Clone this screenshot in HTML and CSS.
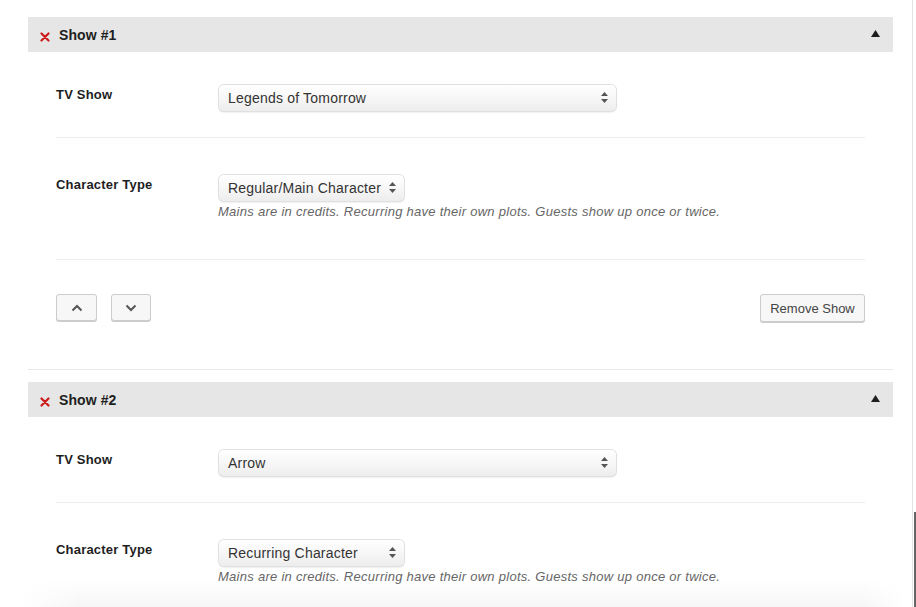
FILE: index.html
```
<!DOCTYPE html>
<html>
<head>
<meta charset="utf-8">
<link rel="stylesheet" href="styles.css">
</head>
<body>
<div class="page">
  <div class="show">
    <div class="show-head">
      <svg class="x-icon" width="10" height="10" viewBox="0 0 10 10"><path d="M1.5 1.5 L8.5 8.5 M8.5 1.5 L1.5 8.5" stroke="#cc1b1b" stroke-width="2.2" stroke-linecap="round"/></svg>
      <span class="show-title">Show #1</span>
      <svg class="toggle" width="9" height="7" viewBox="0 0 9 7"><polygon points="4.5,0 9,7 0,7" fill="#1e1e1e"/></svg>
    </div>
    <div class="show-body">
      <div class="field field-first">
        <div class="label">TV Show</div>
        <div class="control">
          <div class="select wide">Legends of Tomorrow<span class="arrows"><svg width="7" height="11" viewBox="0 0 7 11"><polygon points="3.5,0 7,4 0,4" fill="#555"/><polygon points="0,7 7,7 3.5,11" fill="#555"/></svg></span></div>
        </div>
      </div>
      <div class="field field-second">
        <div class="label">Character Type</div>
        <div class="control">
          <div class="select narrow">Regular/Main Character<span class="arrows"><svg width="7" height="11" viewBox="0 0 7 11"><polygon points="3.5,0 7,4 0,4" fill="#555"/><polygon points="0,7 7,7 3.5,11" fill="#555"/></svg></span></div>
          <p class="hint">Mains are in credits. Recurring have their own plots. Guests show up once or twice.</p>
        </div>
      </div>
      <div class="actions">
        <div class="move">
          <button class="btn icon-btn up"><svg width="12" height="8" viewBox="0 0 12 8"><path d="M1.5 6.5 L6 2 L10.5 6.5" fill="none" stroke="#555" stroke-width="2"/></svg></button>
          <button class="btn icon-btn down"><svg width="12" height="8" viewBox="0 0 12 8"><path d="M1.5 1.5 L6 6 L10.5 1.5" fill="none" stroke="#555" stroke-width="2"/></svg></button>
        </div>
        <button class="btn remove">Remove Show</button>
      </div>
    </div>
  </div>

  <div class="show">
    <div class="show-head">
      <svg class="x-icon" width="10" height="10" viewBox="0 0 10 10"><path d="M1.5 1.5 L8.5 8.5 M8.5 1.5 L1.5 8.5" stroke="#cc1b1b" stroke-width="2.2" stroke-linecap="round"/></svg>
      <span class="show-title">Show #2</span>
      <svg class="toggle" width="9" height="7" viewBox="0 0 9 7"><polygon points="4.5,0 9,7 0,7" fill="#1e1e1e"/></svg>
    </div>
    <div class="show-body">
      <div class="field field-first">
        <div class="label">TV Show</div>
        <div class="control">
          <div class="select wide">Arrow<span class="arrows"><svg width="7" height="11" viewBox="0 0 7 11"><polygon points="3.5,0 7,4 0,4" fill="#555"/><polygon points="0,7 7,7 3.5,11" fill="#555"/></svg></span></div>
        </div>
      </div>
      <div class="field field-second">
        <div class="label">Character Type</div>
        <div class="control">
          <div class="select narrow">Recurring Character<span class="arrows"><svg width="7" height="11" viewBox="0 0 7 11"><polygon points="3.5,0 7,4 0,4" fill="#555"/><polygon points="0,7 7,7 3.5,11" fill="#555"/></svg></span></div>
          <p class="hint">Mains are in credits. Recurring have their own plots. Guests show up once or twice.</p>
        </div>
      </div>
    </div>
  </div>
</div>
<div class="edge"></div>
<div class="edge-dark"></div>
<div class="bottom-shade"></div>
</body>
</html>
```
FILE: styles.css
```
html, body {
  margin: 0;
  padding: 0;
  background: #fff;
  height: 100%;
  overflow: hidden;
}
body {
  font-family: "Liberation Sans", Arial, sans-serif;
  color: #23282d;
}
.page {
  padding: 17px 0 0 28px;
  width: 865px;
}
.show {
  margin-bottom: 12px;
}
.show-head {
  height: 35px;
  background: #e6e6e6;
  display: flex;
  align-items: center;
  padding: 0 13px 0 12px;
}
.x-icon {
  margin-top: 4px;
  margin-right: 9px;
}
.show-title {
  font-size: 14px;
  font-weight: bold;
  color: #1e1e1e;
  flex: 1;
  letter-spacing: 0.1px;
}
.toggle {
  margin-top: -2px;
}
.show-body {
  padding: 0 28px;
  border-bottom: 1px solid #e8e8e8;
}
.field {
  display: flex;
  border-bottom: 1px solid #ececec;
}
.field-first {
  padding: 33px 0 26px;
}
.field-second {
  padding: 37px 0 39px;
}
.show:last-child .field-second {
  border-bottom: none;
}
.label {
  width: 163px;
  font-size: 13px;
  font-weight: bold;
  line-height: 20px;
  color: #1e1e1e;
  letter-spacing: 0.2px;
}
.control {
  display: flex;
  flex-direction: column;
}
.select {
  position: relative;
  height: 26px;
  box-sizing: border-box;
  padding: 0 0 0 9px;
  line-height: 26px;
  font-size: 14px;
  letter-spacing: 0.2px;
  color: #333;
  border-radius: 5px;
  background: linear-gradient(#ffffff, #f5f5f5 60%, #ededed);
  box-shadow: 0 0 0 1px #e0e0e0, 0 1px 2px rgba(0, 0, 0, 0.2);
}
.select.wide {
  width: 397px;
}
.select.narrow {
  width: 185px;
}
.arrows {
  position: absolute;
  right: 8px;
  top: 7px;
  line-height: 0;
}
.hint {
  margin: 3px 0 0 -1px;
  font-size: 13px;
  line-height: 16px;
  font-style: italic;
  color: #666;
  letter-spacing: 0.27px;
}
.actions {
  display: flex;
  justify-content: space-between;
  align-items: flex-start;
  padding: 34px 0 47px;
}
.move {
  display: flex;
  gap: 14px;
}
.btn {
  font-family: "Liberation Sans", Arial, sans-serif;
  background: #f7f7f7;
  border: 1px solid #cccccc;
  border-radius: 3px;
  box-shadow: 0 1px 0 #cccccc;
  color: #444;
  margin: 0;
  cursor: pointer;
}
.icon-btn {
  width: 41px;
  height: 27px;
  display: flex;
  align-items: center;
  justify-content: center;
  padding: 0;
}
.icon-btn.down {
  width: 40px;
}
.remove {
  height: 28px;
  width: 105px;
  font-size: 13px;
  padding: 0;
  color: #444;
}
.edge {
  position: fixed;
  top: 0;
  bottom: 0;
  left: 912px;
  width: 1px;
  background: #e4e4e4;
}
.edge-dark {
  position: fixed;
  top: 512px;
  bottom: 0;
  left: 914px;
  width: 2px;
  background: #666;
}
.bottom-shade {
  position: fixed;
  left: 0;
  right: 4px;
  bottom: 0;
  height: 28px;
  background: linear-gradient(rgba(0, 0, 0, 0), rgba(0, 0, 0, 0.035));
  -webkit-mask-image: linear-gradient(to right, transparent 20px, #000 80px, #000 860px, transparent 905px);
  mask-image: linear-gradient(to right, transparent 20px, #000 80px, #000 860px, transparent 905px);
  pointer-events: none;
}
```
